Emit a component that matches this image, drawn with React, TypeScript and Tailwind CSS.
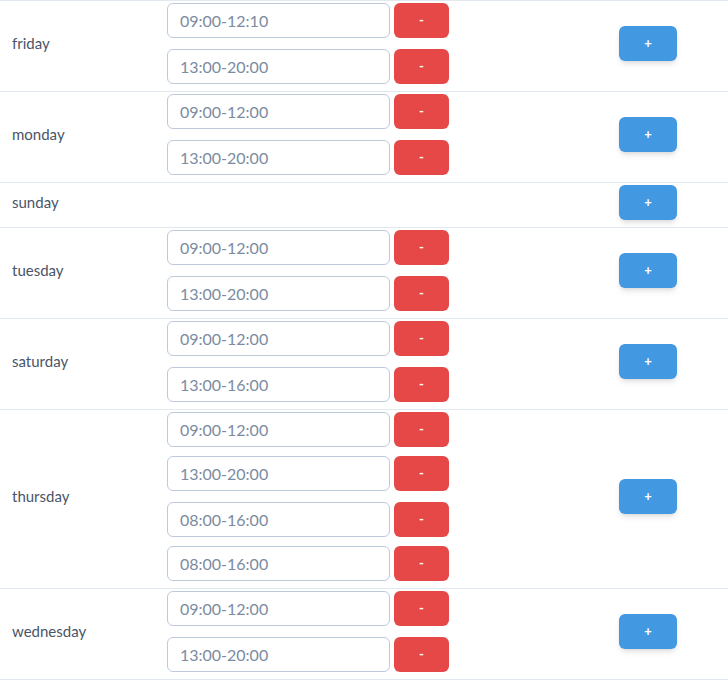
import React, { useState } from 'react';

type Day = { name: string; slots: string[] };

const initialDays: Day[] = [
  { name: 'friday', slots: ['09:00-12:10', '13:00-20:00'] },
  { name: 'monday', slots: ['09:00-12:00', '13:00-20:00'] },
  { name: 'sunday', slots: [] },
  { name: 'tuesday', slots: ['09:00-12:00', '13:00-20:00'] },
  { name: 'saturday', slots: ['09:00-12:00', '13:00-16:00'] },
  { name: 'thursday', slots: ['09:00-12:00', '13:00-20:00', '08:00-16:00', '08:00-16:00'] },
  { name: 'wednesday', slots: ['09:00-12:00', '13:00-20:00'] },
];

const App: React.FC = () => {
  const [days, setDays] = useState<Day[]>(initialDays);

  const updateSlot = (d: number, i: number, value: string) => {
    setDays(prev =>
      prev.map((day, di) =>
        di === d ? { ...day, slots: day.slots.map((s, si) => (si === i ? value : s)) } : day
      )
    );
  };

  const removeSlot = (d: number, i: number) => {
    setDays(prev =>
      prev.map((day, di) => (di === d ? { ...day, slots: day.slots.filter((_, si) => si !== i) } : day))
    );
  };

  const addSlot = (d: number) => {
    setDays(prev => prev.map((day, di) => (di === d ? { ...day, slots: [...day.slots, ''] } : day)));
  };

  return (
    <div className="w-[728px] bg-white font-['Lato',_'Noto_Sans',_sans-serif] text-[#4a5568]">
      <div className="border-t border-[#e2e8f0]">
        {days.map((day, d) => (
          <div key={day.name} className="grid grid-cols-[155px_1fr_160px] border-b border-[#e2e8f0]">
            <div className="flex items-center pl-3 pb-[5px] text-[15px]">{day.name}</div>
            <div className="pt-[2px] pb-[7px] pl-3">
              {day.slots.map((slot, i) => (
                <div
                  key={i}
                  className={`flex items-center ${
                    i === 0 ? '' : day.slots.length > 2 && i % 2 === 1 ? 'mt-[9px]' : 'mt-[11px]'
                  }`}
                >
                  <input
                    type="text"
                    value={slot}
                    onChange={e => updateSlot(d, i, e.target.value)}
                    className="w-[223px] h-[35px] rounded-md border border-[#bccadb] pl-3 pb-[1px] text-[16px] text-[#7b8ba1] outline-none"
                  />
                  <button
                    onClick={() => removeSlot(d, i)}
                    className="ml-[4px] w-[55px] h-[35px] rounded-md bg-[#e64848] text-white text-[13px] font-bold"
                  >
                    -
                  </button>
                </div>
              ))}
            </div>
            <div className="flex items-center justify-center pt-[2px] pb-[7px]">
              <button
                onClick={() => addSlot(d)}
                className="w-[58px] h-[35px] rounded-md bg-[#4299e1] text-white text-[13px] font-bold shadow-md"
              >
                +
              </button>
            </div>
          </div>
        ))}
      </div>
    </div>
  );
};

export default App;
